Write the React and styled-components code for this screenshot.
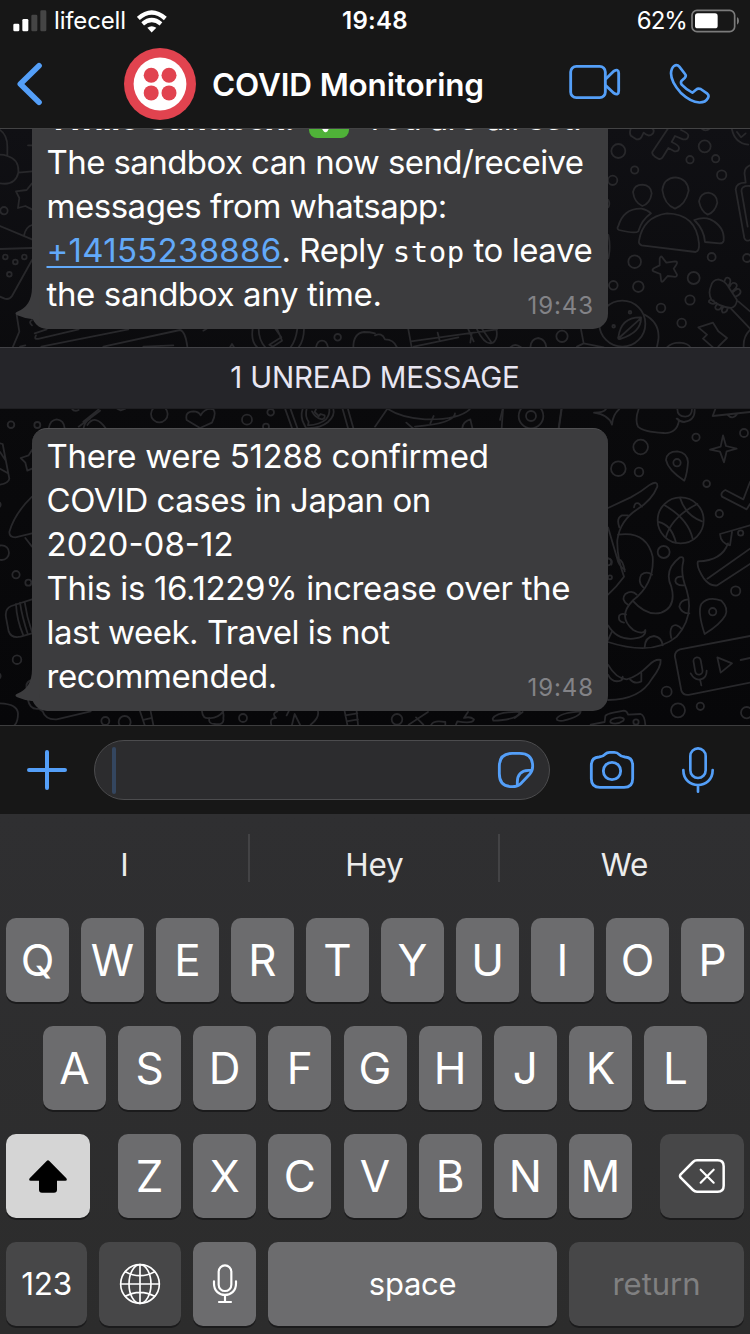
import React from 'react';
import styled, { createGlobalStyle } from 'styled-components';

const BLUE = '#549ff8';

const GlobalStyle = createGlobalStyle`
  *, *::before, *::after { box-sizing: border-box; }
  body { margin: 0; background: #171717; }
`;

const Screen = styled.div`
  width: 750px;
  height: 1334px;
  display: flex;
  flex-direction: column;
  overflow: hidden;
  background: #171717;
  color: #fff;
  font-family: Inter, "Liberation Sans", sans-serif;
`;

const Icon = styled.svg`
  display: block;
  flex: none;
  fill: none;
  stroke: ${(p) => p.$color || BLUE};
  stroke-linecap: ${(p) => p.$cap || 'round'};
  stroke-linejoin: round;
`;

/* ---------- status bar ---------- */

const StatusBar = styled.div`
  height: 40px;
  flex: none;
  display: grid;
  grid-template-columns: 1fr auto 1fr;
  align-items: center;
  padding: 1px 11px 0 13px;
  font-size: 24px;
  line-height: 40px;
`;

const StatusGroup = styled.div`
  display: flex;
  align-items: center;
  justify-content: ${(p) => (p.$end ? 'flex-end' : 'flex-start')};
`;

const Carrier = styled.span`
  margin: 0 11px 0 7px;
  letter-spacing: -0.15px;
`;

const Clock = styled.span`
  margin-right: 2px;
  font-weight: 600;
  letter-spacing: 0.3px;
`;

const BatteryLevel = styled.span`
  margin-right: 4px;
  letter-spacing: -0.95px;
`;

/* ---------- header ---------- */

const Header = styled.header`
  height: 89px;
  flex: none;
  display: flex;
  align-items: center;
  padding: 0 39px 0 17px;
  border-bottom: 1px solid #434344;
`;

const Avatar = styled.svg`
  display: block;
  flex: none;
  margin: 0 16px 0 81px;
`;

const Title = styled.h1`
  margin: 2px auto 0 0;
  font-size: 31.5px;
  font-weight: 600;
  line-height: 40px;
  letter-spacing: -0.15px;
  white-space: nowrap;
`;

const HeaderActions = styled.div`
  display: flex;
  align-items: center;
  gap: 48px;
`;

/* ---------- chat ---------- */

const Chat = styled.main`
  position: relative;
  flex: 1;
  min-height: 0;
  display: flex;
  flex-direction: column;
  justify-content: flex-end;
  align-items: flex-start;
  padding-bottom: 14px;
  overflow: hidden;
  background: linear-gradient(#101014, #0a0a0c 45%, #070709);
`;

const Wallpaper = styled.svg`
  position: absolute;
  left: 0;
  top: 0;
  width: 750px;
  height: 596px;
  fill: none;
  stroke: #28282b;
  stroke-width: 5.4;
  stroke-linecap: round;
  stroke-linejoin: round;
`;

const Bubble = styled.article`
  position: relative;
  flex: none;
  width: 576px;
  margin-left: 32px;
  padding: 5px 0 13px 14.5px;
  border-top: 1px solid #4f4f51;
  border-radius: 15px;
  background: #3c3c3e;
`;

const Tail = styled.svg`
  position: absolute;
  left: -18px;
  bottom: 0;
  fill: #3c3c3e;
`;

const Line = styled.div`
  height: 44px;
  display: flex;
  align-items: baseline;
  font-size: 33px;
  line-height: 44px;
  letter-spacing: ${(p) => p.$track || 0}px;
  white-space: pre;
`;

const Strong = styled.strong`
  margin-left: 1px;
  font-weight: 700;
  letter-spacing: -0.55px;
`;

const CheckEmoji = styled.svg`
  flex: none;
  align-self: flex-start;
  width: 40px;
  height: 40px;
  margin: 1.5px 15px 0 14px;
`;

const PhoneLink = styled.a`
  color: #62a9f9;
  text-decoration: underline;
  text-decoration-thickness: 2px;
  text-underline-offset: 4px;
  text-decoration-skip-ink: none;
  letter-spacing: ${(p) => p.$track}px;
`;

const Mono = styled.code`
  font-family: "DejaVu Sans Mono", monospace;
  font-size: 29px;
  letter-spacing: 0.5px;
`;

const Time = styled.time`
  position: absolute;
  right: 14px;
  bottom: 8px;
  color: #838387;
  font-size: 24px;
  line-height: 30px;
  letter-spacing: 0.9px;
`;

const Unread = styled.div`
  position: relative;
  width: 750px;
  height: 62px;
  flex: none;
  margin: 18px 0 19px;
  border-top: 1px solid #414145;
  border-bottom: 1px solid #1e1e21;
  background: #252529;
  color: #e8e6f2;
  font-size: 29.5px;
  line-height: 58px;
  letter-spacing: -0.2px;
  text-align: center;
`;

/* ---------- composer ---------- */

const Composer = styled.div`
  height: 89px;
  flex: none;
  display: flex;
  align-items: center;
  padding: 0 35px 0 26px;
  border-top: 1px solid #3d3d3e;
  background: #171717;
`;

const Field = styled.div`
  width: 456px;
  height: 60px;
  margin: 0 39px 0 26px;
  display: flex;
  align-items: center;
  justify-content: space-between;
  padding: 0 14px 0 17px;
  border: 1px solid #4c4c4e;
  border-radius: 30px;
  background: #2c2c2e;
`;

const Caret = styled.span`
  width: 4px;
  height: 47px;
  border-radius: 2px;
  background: #34465f;
`;

const MicSlot = styled.div`
  margin-left: 46px;
`;

/* ---------- keyboard ---------- */

const Keyboard = styled.section`
  height: 520px;
  flex: none;
  background: linear-gradient(#2f2f31, #2c2c2c);
`;

const Suggestions = styled.div`
  height: 88px;
  display: grid;
  grid-template-columns: repeat(3, 250px);
  align-items: center;
`;

const Suggestion = styled.div`
  height: 48px;
  padding: 7px 0 0 1px;
  border-right: 2px solid ${(p) => (p.$last ? 'transparent' : '#434345')};
  color: #ececec;
  font-size: 31.5px;
  line-height: 48px;
  letter-spacing: -0.2px;
  text-align: center;
`;

const Keys = styled.div`
  display: flex;
  flex-direction: column;
  gap: 24px;
  padding: 16px 6px 0;
`;

const KeyRow = styled.div`
  display: flex;
  justify-content: ${(p) => (p.$spread ? 'space-between' : 'center')};
  gap: ${(p) => (p.$spread ? 0 : '12.15px')};
`;

const KEY_TONES = { letter: '#6c6c6e', dark: '#474748', light: '#d5d5d5' };

const Key = styled.button`
  width: ${(p) => p.$width || 63}px;
  height: 84px;
  flex: none;
  display: flex;
  align-items: center;
  justify-content: center;
  padding: 0;
  border: 0;
  border-radius: 10px;
  background: ${(p) => KEY_TONES[p.$tone || 'letter']};
  box-shadow: 0 2px 0 #1b1b1c;
  color: ${(p) => (p.$muted ? '#808081' : '#fff')};
  font-family: inherit;
  font-size: ${(p) => p.$size || 44}px;
  letter-spacing: ${(p) => p.$track || 0}px;
  line-height: 84px;
`;

const LetterGroup = styled.div`
  display: flex;
  gap: 12.15px;
`;

const Letters = ({ keys }) => keys.split('').map((k) => <Key key={k}>{k}</Key>);

const dots = (list) =>
  list.map(([x, y, r]) => <circle key={`${x}-${y}`} cx={x} cy={y} r={r} />);

function Doodles() {
  return (
    <Wallpaper viewBox="0 129 750 596" aria-hidden="true">
      {/* upper left */}
      <g transform="translate(0 120) scale(.33333)">
        <path d="M0 30Q22 45 22 80V108Q58 118 55 158Q46 198 0 190M0 104Q12 104 22 108M55 158L96 154M84 76H96" />
        <path d="M96 190L80 210L48 214L58 234L54 264L76 258L96 268" />
        <path d="M0 318L96 358M0 387L96 384M72 346Q78 320 96 315M96 420L36 528Q28 540 14 536L0 530" />
        <path d="M50 585L58 635L38 682M96 600Q84 606 96 616M104 640L140 628M108 646Q100 660 118 656L236 628M124 680L385 628M310 680L540 630Q556 634 562 680M60 680L76 676M430 680L520 676M610 632L620 626M690 682L696 672L702 682" />
        <path d="M758 626Q752 664 772 682M776 626Q776 660 796 682M912 626Q912 660 896 682M892 626Q888 660 872 682M826 626L844 652L808 674L818 680L846 662L832 628" />
        <path d="M948 682Q952 662 966 662Q980 662 984 682M1060 682Q1060 640 1092 636Q1110 636 1125 640" />
        {dots([[12, 272, 11], [16, 411, 7], [46, 426, 7], [73, 411, 7], [28, 463, 7], [1013, 652, 10]])}
        <path d="M560 900Q554 875 580 874Q596 874 602 886Q616 862 640 868Q650 880 636 908L600 924ZM216 866Q222 876 236 870M250 905L296 868M236 920L300 872M262 915Q286 880 318 926M250 930Q252 906 270 896M146 925Q150 900 170 898Q192 900 194 925M352 866L362 871L376 866M856 868L876 924M872 868L892 924M1028 868L1044 924M1044 868L1060 924" />
        <path d="M908 866Q900 890 912 912L918 924Q960 926 984 906Q1006 886 1000 866M920 866Q914 888 926 906L924 916Q960 914 978 898Q990 884 988 866M936 874Q946 894 966 898Q976 896 974 886L962 882L956 888L944 876L948 868" />
        {dots([[33, 914, 10], [112, 915, 9], [478, 882, 25], [741, 899, 15], [812, 877, 10], [798, 920, 9]])}
      </g>
      {/* upper right */}
      <g transform="translate(375 120) scale(.33333)">
        <path d="M768 24Q760 44 772 50L784 58Q794 60 800 50L806 38Q822 54 834 40Q840 30 830 24M880 24L832 96Q830 104 840 110L850 116Q858 120 864 110L880 84L898 94Q910 96 912 86Q914 76 890 66L900 48L924 58Q940 60 940 46Q938 38 918 30" />
        <path d="M1070 24Q1078 70 1120 74M1086 36L1098 52L1112 40M978 24Q992 38 1006 24" />
        <path d="M774 216Q778 194 802 194Q828 196 830 220Q826 250 802 258Q778 248 774 216ZM862 210Q866 174 902 172Q938 176 941 212Q932 254 900 266Q868 254 862 210ZM972 244Q976 220 1000 218Q1026 222 1027 248Q1020 276 998 284Q978 274 972 244Z" />
        <path d="M730 318Q746 264 800 266Q818 270 828 280Q800 300 790 334Q780 342 732 330Q724 326 730 318ZM792 362Q804 290 876 280Q964 282 972 370Q974 392 962 396L800 376Q790 372 792 362ZM958 300Q984 290 1006 298Q1050 320 1046 362Q1044 370 1034 370L990 366Q988 330 958 300Z" />
        <path d="M860 410L874 428L900 424Q910 424 904 434L896 446L906 464Q906 472 896 470L878 468L864 484Q858 488 858 478L856 462L836 454Q828 450 838 444L854 436V416Q856 408 860 410Z" />
        <path d="M700 345Q708 380 700 415M700 240Q706 252 700 262" />
        <path d="M1125 136Q1104 144 1110 170L1112 188Q1084 188 1082 208L1108 354Q1112 366 1125 360M1125 198Q1096 196 1100 216L1118 320" />
        <path d="M1008 498Q1012 480 1030 478Q1050 482 1060 500L1086 540Q1084 560 1068 564Q1032 560 1010 540Q998 520 1008 498ZM1048 486Q1052 466 1064 476Q1070 484 1060 498M1064 500Q1072 482 1084 492Q1090 500 1072 514M1074 516Q1090 500 1096 512Q1100 522 1082 530M1016 542Q1000 536 1002 546Q1012 556 1024 548M1028 552Q1016 562 1024 568Q1036 572 1040 558M1046 560Q1036 572 1044 578Q1056 578 1058 564M1090 544L1125 574M1068 566L1125 626" />
        <path d="M730 652Q738 590 798 592Q800 636 738 656Q728 660 730 652ZM732 654L796 596M808 584Q856 608 850 660L846 680M618 628L626 670L606 680M626 670L686 682M1014 608L970 622L996 644L984 656L1014 682M1014 608L1030 634L1056 654L1030 680M876 682Q890 668 914 668Q940 670 946 682M1125 630Q1104 650 1106 682" />
        <circle cx="742" cy="611" r="69" />
        <path d="M100 628L110 682M108 664L366 628M116 680L250 652M188 638L194 662M280 628L296 664M306 628Q330 678 354 668Q370 656 364 628M322 628L350 668M290 640L286 668M0 646Q20 636 30 658Q56 658 66 682M406 682Q420 668 438 682M466 682Q468 656 490 654Q512 658 514 682" />
        {dots([[730, 93, 21], [779, 150, 11], [713, 181, 14], [989, 79, 18], [945, 119, 11], [1022, 116, 11], [1040, 165, 14], [779, 425, 19], [715, 496, 13], [790, 500, 16], [956, 474, 18], [1010, 411, 12], [945, 540, 14], [858, 564, 13], [920, 609, 13], [1116, 414, 12], [765, 577, 4], [716, 619, 4], [561, 649, 17]])}
        <path d="M0 920L36 868M40 868Q80 894 150 898Q250 900 284 868M94 908L120 930M176 888L166 910M120 920Q240 910 240 880M262 924Q264 904 286 898L292 924M384 868L380 924M560 868L552 924" />
        <circle cx="468" cy="888" r="37" />
        <circle cx="468" cy="888" r="15" />
      </g>
      {/* lower right */}
      <g transform="translate(500 400) scale(.33333)">
        <path d="M282 38Q312 38 318 27M282 38Q326 44 336 74Q338 44 358 27M416 27Q404 60 414 80Q430 96 490 99Q530 102 537 62L530 56M532 27Q532 50 556 50Q576 48 576 27M584 27Q586 62 552 66Q540 66 532 56M646 27L638 48L750 36M682 44Q698 62 714 40M8 27L0 60M184 27L176 84" />
        <path d="M669 106L678 138L710 146L680 154L672 187L660 155L630 149L662 140Z" />
        <path d="M553 242Q504 210 498 180Q500 154 532 154Q562 158 564 186Q562 220 553 242Z" />
        <circle cx="531" cy="188" r="11" />
        <circle cx="542" cy="361" r="69" />
        <path d="M494 316Q564 356 578 416M540 293Q556 346 606 364M592 312Q516 350 498 410M476 366Q514 374 528 428" />
        <path d="M324 324L392 292Q420 278 450 254Q474 240 472 260Q456 300 412 328Q360 362 352 420Q350 470 372 530Q350 560 324 584M324 382L350 470Q356 500 374 508M354 404Q440 392 458 470Q464 550 400 600Q350 650 400 690Q430 706 436 690Q440 712 400 716Q350 720 324 676M398 602Q440 650 484 638Q530 620 514 560Q490 510 540 472Q552 468 550 484Q540 520 560 570Q584 650 530 710Q460 770 324 726M324 720L336 694" />
        <path d="M402 322Q404 306 416 310L426 320M358 382Q348 354 366 346L384 346M324 474Q340 478 334 494M356 478Q370 480 374 514M430 562Q412 546 424 524Q440 512 456 524M384 614Q362 600 376 582Q396 568 410 584M372 668Q352 664 358 646Q366 638 378 644M546 530Q526 528 526 544Q530 558 552 556M564 598Q540 600 538 620Q546 642 568 640M546 688Q530 668 516 680Q508 692 514 714M434 742Q434 712 462 708Q486 712 488 736" />
        <path d="M324 794Q348 836 380 838Q412 830 446 796Q466 776 482 780Q484 800 456 836Q420 900 324 900M324 824Q336 850 362 842Q370 838 368 830M390 838Q404 854 424 844L424 818" />
        <path d="M614 702Q592 636 604 612Q624 588 664 602Q686 624 676 646Q662 672 614 702Z" />
        <circle cx="638" cy="635" r="11" />
        <path d="M750 246L730 298L676 270Q660 278 666 290L740 328L750 312M750 376L660 402Q662 430 690 436L696 396M684 430Q666 482 594 484Q588 500 612 536Q630 560 652 556L750 492M622 536L750 446" />
        <path d="M750 708L540 748Q520 756 526 776L544 872Q550 888 570 884L750 848M722 780L750 774M652 772L662 818L696 790Z" />
        <rect x="583" y="772" width="22" height="52" rx="11" transform="rotate(-10 594 798)" />
        <path d="M572 820Q584 842 602 838Q620 834 620 812M600 838L604 856" />
        {dots([[422, 141, 22], [355, 206, 22], [417, 216, 13], [588, 112, 11], [732, 99, 12], [620, 251, 10], [658, 341, 11], [722, 399, 8], [491, 456, 18], [707, 573, 14], [500, 875, 15], [534, 931, 21], [601, 919, 11], [740, 938, 17], [330, 532, 6], [324, 486, 10]])}
      </g>
      {/* lower left */}
      <g transform="translate(0 400) scale(.33333)">
        <path d="M0 130L8 132L28 236Q26 250 0 254M0 156L16 180M0 206L24 220M96 150L86 166L62 174L76 188L82 212L96 206M96 290Q44 340 28 396Q28 412 46 412L96 400M76 414L96 440M96 598L34 618Q14 626 18 652L26 694Q34 716 62 710L96 700M48 612Q50 660 70 706M60 608Q66 650 84 704M74 606Q80 650 96 696M96 840Q76 844 80 866M84 900Q90 930 116 926L128 934M0 910Q52 912 54 940Q54 966 44 975M128 934Q136 960 170 958L272 934" />
        {dots([[5, 458, 22], [48, 524, 11], [85, 548, 9], [51, 779, 13], [316, 963, 12], [374, 966, 18]])}
        <path d="M420 934L434 975M452 934L460 975M430 960L456 954M0 308Q4 314 0 320M0 822Q4 828 0 834" />
      </g>
      {/* strip under the last message */}
      <g transform="translate(160 690) scale(.33333)">
        <path d="M126 64Q128 88 148 84Q144 102 164 102Q194 106 190 84Q192 72 188 64M148 84Q172 86 190 64M334 104Q328 84 348 84Q334 70 352 64M380 76L386 64M396 104L404 72L420 104M474 64Q478 84 452 104M554 64L562 104M590 64L594 104M556 76L592 70M560 94L594 88M746 104L804 66M768 82L790 104M814 104Q820 90 856 96V104M888 104L892 94Q940 102 942 88Q930 78 912 84L924 66M998 86Q1010 64 1080 66Q1072 90 1000 92ZM1064 84L1088 66M1190 86Q1200 68 1262 64Q1262 80 1210 92Q1190 94 1190 86ZM1292 104L1334 96L1336 78Q1340 72 1360 68L1392 62Q1402 64 1404 74L1442 72Q1454 76 1456 104M1352 98Q1346 86 1380 82Q1396 84 1390 92Q1370 106 1352 98Z" />
        {dots([[249, 84, 12], [711, 88, 16], [1428, 96, 8]])}
      </g>
    </Wallpaper>
  );
}

const BubbleTail = () => (
  <Tail width="30" height="42" viewBox="42 500 90 126" aria-hidden="true">
    <path d="M96 500Q96 558 50 575Q42 580 52 585Q74 595 100 597Q106 608 118 615V500Z" />
  </Tail>
);

export default function App() {
  return (
    <Screen>
      <GlobalStyle />
      <StatusBar>
        <StatusGroup>
          <Icon width="34" height="22" viewBox="39 26 100 66" $color="none">
            <rect x="39" y="67" width="18" height="23" rx="4" fill="#fff" />
            <rect x="66" y="53" width="18" height="37" rx="4" fill="#fff" />
            <rect x="93" y="40" width="18" height="50" rx="4" fill="#454545" />
            <rect x="120" y="27" width="18" height="63" rx="4" fill="#454545" />
          </Icon>
          <Carrier>lifecell</Carrier>
          <Icon width="30" height="23" viewBox="410 26 90 68" $color="#fff" $cap="butt">
            <path d="M414 51Q454 15 495 51" strokeWidth="13" />
            <path d="M427 67Q454 44 482 67" strokeWidth="12.500" />
            <path d="M441 79Q454 69 468 79L454 93Z" fill="#fff" stroke="none" />
          </Icon>
        </StatusGroup>
        <Clock>19:48</Clock>
        <StatusGroup $end>
          <BatteryLevel>62%</BatteryLevel>
          <Icon width="48" height="24" viewBox="947 23 144 72" $color="#7b7b7b">
            <rect x="950" y="27" width="128" height="64" rx="15" strokeWidth="5" />
            <rect x="959" y="36" width="68" height="45" rx="8" fill="#fff" stroke="none" />
            <path d="M1085 47Q1091 50 1091 59Q1091 67 1085 70Z" fill="#7b7b7b" stroke="none" />
          </Icon>
        </StatusGroup>
      </StatusBar>

      <Header>
        <Icon width="26" height="44" viewBox="51 186 78 132" strokeWidth="17">
          <path d="M117 197L61 252L117 307" />
        </Icon>
        <Avatar width="72" height="72" viewBox="0 0 72 72">
          <circle cx="36" cy="36" r="36" fill="#e1434f" />
          <circle cx="36" cy="36" r="26.4" fill="#fff" />
          <g fill="#e1434f">
            <circle cx="27.2" cy="27.2" r="7.5" />
            <circle cx="45" cy="27.2" r="7.5" />
            <circle cx="27.2" cy="44.9" r="7.5" />
            <circle cx="45" cy="44.9" r="7.5" />
          </g>
        </Avatar>
        <Title>COVID Monitoring</Title>
        <HeaderActions>
          <Icon width="52" height="40" viewBox="581 192 156 120" strokeWidth="8.500">
            <rect x="586" y="199" width="104" height="94" rx="17" />
            <path d="M692 236L715 214Q730 205 730 219V273Q730 288 715 279L692 257" />
          </Icon>
          <Icon width="42" height="42" viewBox="883 183 126 126" strokeWidth="8">
            <path d="M898 192Q907 186 914 194L931 216Q936 222 930 228L921 236Q917 241 921 248Q936 264 953 272L964 263Q970 258 978 261L998 275Q1004 280 1000 288Q992 302 974 301.500Q948 300 918 272Q889 240 889 214Q890 198 898 192Z" />
          </Icon>
        </HeaderActions>
      </Header>

      <Chat>
        <Doodles />
        <Bubble>
          <Line $track={-0.65}>
            <Strong>Twilio Sandbox:</Strong>
            <CheckEmoji viewBox="0 0 40 40" role="img" aria-label="check mark">
              <rect width="40" height="40" rx="8" fill="#4fb238" />
              <path d="M9 21L16.500 32L31 8" fill="none" stroke="#fff" strokeWidth="4.500" strokeLinejoin="round" strokeLinecap="round" />
            </CheckEmoji>
            <span>You are all set!</span>
          </Line>
          <Line $track={-0.58}>The sandbox can now send/receive</Line>
          <Line $track={-0.47}>messages from whatsapp:</Line>
          <Line $track={-0.45}>
            <PhoneLink $track={0.27}>+14155238886</PhoneLink>
            <span>. Reply </span>
            <Mono>stop</Mono>
            <span> to leave</span>
          </Line>
          <Line $track={-0.37}>the sandbox any time.</Line>
          <Time>19:43</Time>
          <BubbleTail />
        </Bubble>
        <Unread>1 UNREAD MESSAGE</Unread>
        <Bubble>
          <Line $track={-0.3}>There were 51288 confirmed</Line>
          <Line $track={-0.48}>COVID cases in Japan on</Line>
          <Line>2020-08-12</Line>
          <Line $track={-0.34}>This is 16.1229% increase over the</Line>
          <Line $track={-0.49}>last week. Travel is not</Line>
          <Line $track={-0.42}>recommended.</Line>
          <Time>19:48</Time>
          <BubbleTail />
        </Bubble>
      </Chat>

      <Composer>
        <Icon width="42" height="42" viewBox="0 0 42 42" strokeWidth="4">
          <path d="M21 3V39M3 21H39" />
        </Icon>
        <Field>
          <Caret />
          <Icon width="38" height="38" viewBox="366 213 114 114" strokeWidth="8.500">
            <path d="M412 320Q373 320 373 281V259Q373 220 412 220H434Q473 220 473 259Q473 273 464 283L437 311Q428 320 412 320Z" />
            <path d="M470 271H460Q427 273 427 306V316" />
          </Icon>
        </Field>
        <Icon width="46" height="40" viewBox="642 210 138 120" strokeWidth="8.500">
          <path d="M672 231Q684 230 690 223Q696 217 704 217H718Q727 217 732 223Q738 230 750 231Q773 232 773 256V296Q773 322 747 322H675Q649 322 649 296V256Q649 232 672 231Z" />
          <circle cx="711" cy="273" r="26" />
        </Icon>
        <MicSlot>
          <Icon width="34" height="48" viewBox="918 201 102 144" strokeWidth="8">
            <rect x="946" y="208" width="46" height="89" rx="23" />
            <path d="M925 273C925 333 1013 333 1013 273M969 318V338" />
          </Icon>
        </MicSlot>
      </Composer>

      <Keyboard>
        <Suggestions>
          <Suggestion>I</Suggestion>
          <Suggestion>Hey</Suggestion>
          <Suggestion $last>We</Suggestion>
        </Suggestions>
        <Keys>
          <KeyRow $spread>
            <Letters keys="QWERTYUIOP" />
          </KeyRow>
          <KeyRow>
            <Letters keys="ASDFGHJKL" />
          </KeyRow>
          <KeyRow $spread>
            <Key $width={84} $tone="light">
              <Icon width="38" height="33" viewBox="87 118 114 99" $color="none">
                <path fill="#000" d="M140 121Q144 117 148 121L199 173Q203 180 196 180H171V207Q171 216 162 216H126Q117 216 117 207V180H92Q85 180 89 173Z" />
              </Icon>
            </Key>
            <LetterGroup>
              <Letters keys="ZXCVBNM" />
            </LetterGroup>
            <Key $width={84} $tone="dark">
              <Icon width="48" height="36" viewBox="909 114 144 108" $color="#fff" strokeWidth="7.500">
                <path d="M917 163L954 126Q959 121 966 121H1028Q1046 121 1046 139V197Q1046 215 1028 215H966Q959 215 954 210L917 173Q913 168 917 163Z" />
                <path d="M977 149L1016 188M1016 149L977 188" strokeWidth="6.500" />
              </Icon>
            </Key>
          </KeyRow>
          <KeyRow $spread>
            <Key $width={81} $tone="dark" $size={31.5} $track={-0.3}>123</Key>
            <Key $width={82} $tone="dark">
              <Icon width="42" height="42" viewBox="357 429 126 126" $color="#fff" strokeWidth="5">
                <circle cx="420" cy="492" r="58" />
                <ellipse cx="420" cy="492" rx="33" ry="58" />
                <path d="M420 434V550M362 492H478M376 455Q420 479 464 455M376 529Q420 505 464 529" />
              </Icon>
            </Key>
            <Key>
              <Icon width="26" height="42" viewBox="636 431 78 126" $color="#fff" strokeWidth="6.500">
                <rect x="656" y="438" width="38" height="77" rx="19" />
                <path d="M642 486V493C642 538 708 538 708 493V486M675 528V547M657 548H693" />
              </Icon>
            </Key>
            <Key $width={289} $size={31} $track={-0.3}>space</Key>
            <Key $width={175} $tone="dark" $size={31} $muted>return</Key>
          </KeyRow>
        </Keys>
      </Keyboard>
    </Screen>
  );
}
